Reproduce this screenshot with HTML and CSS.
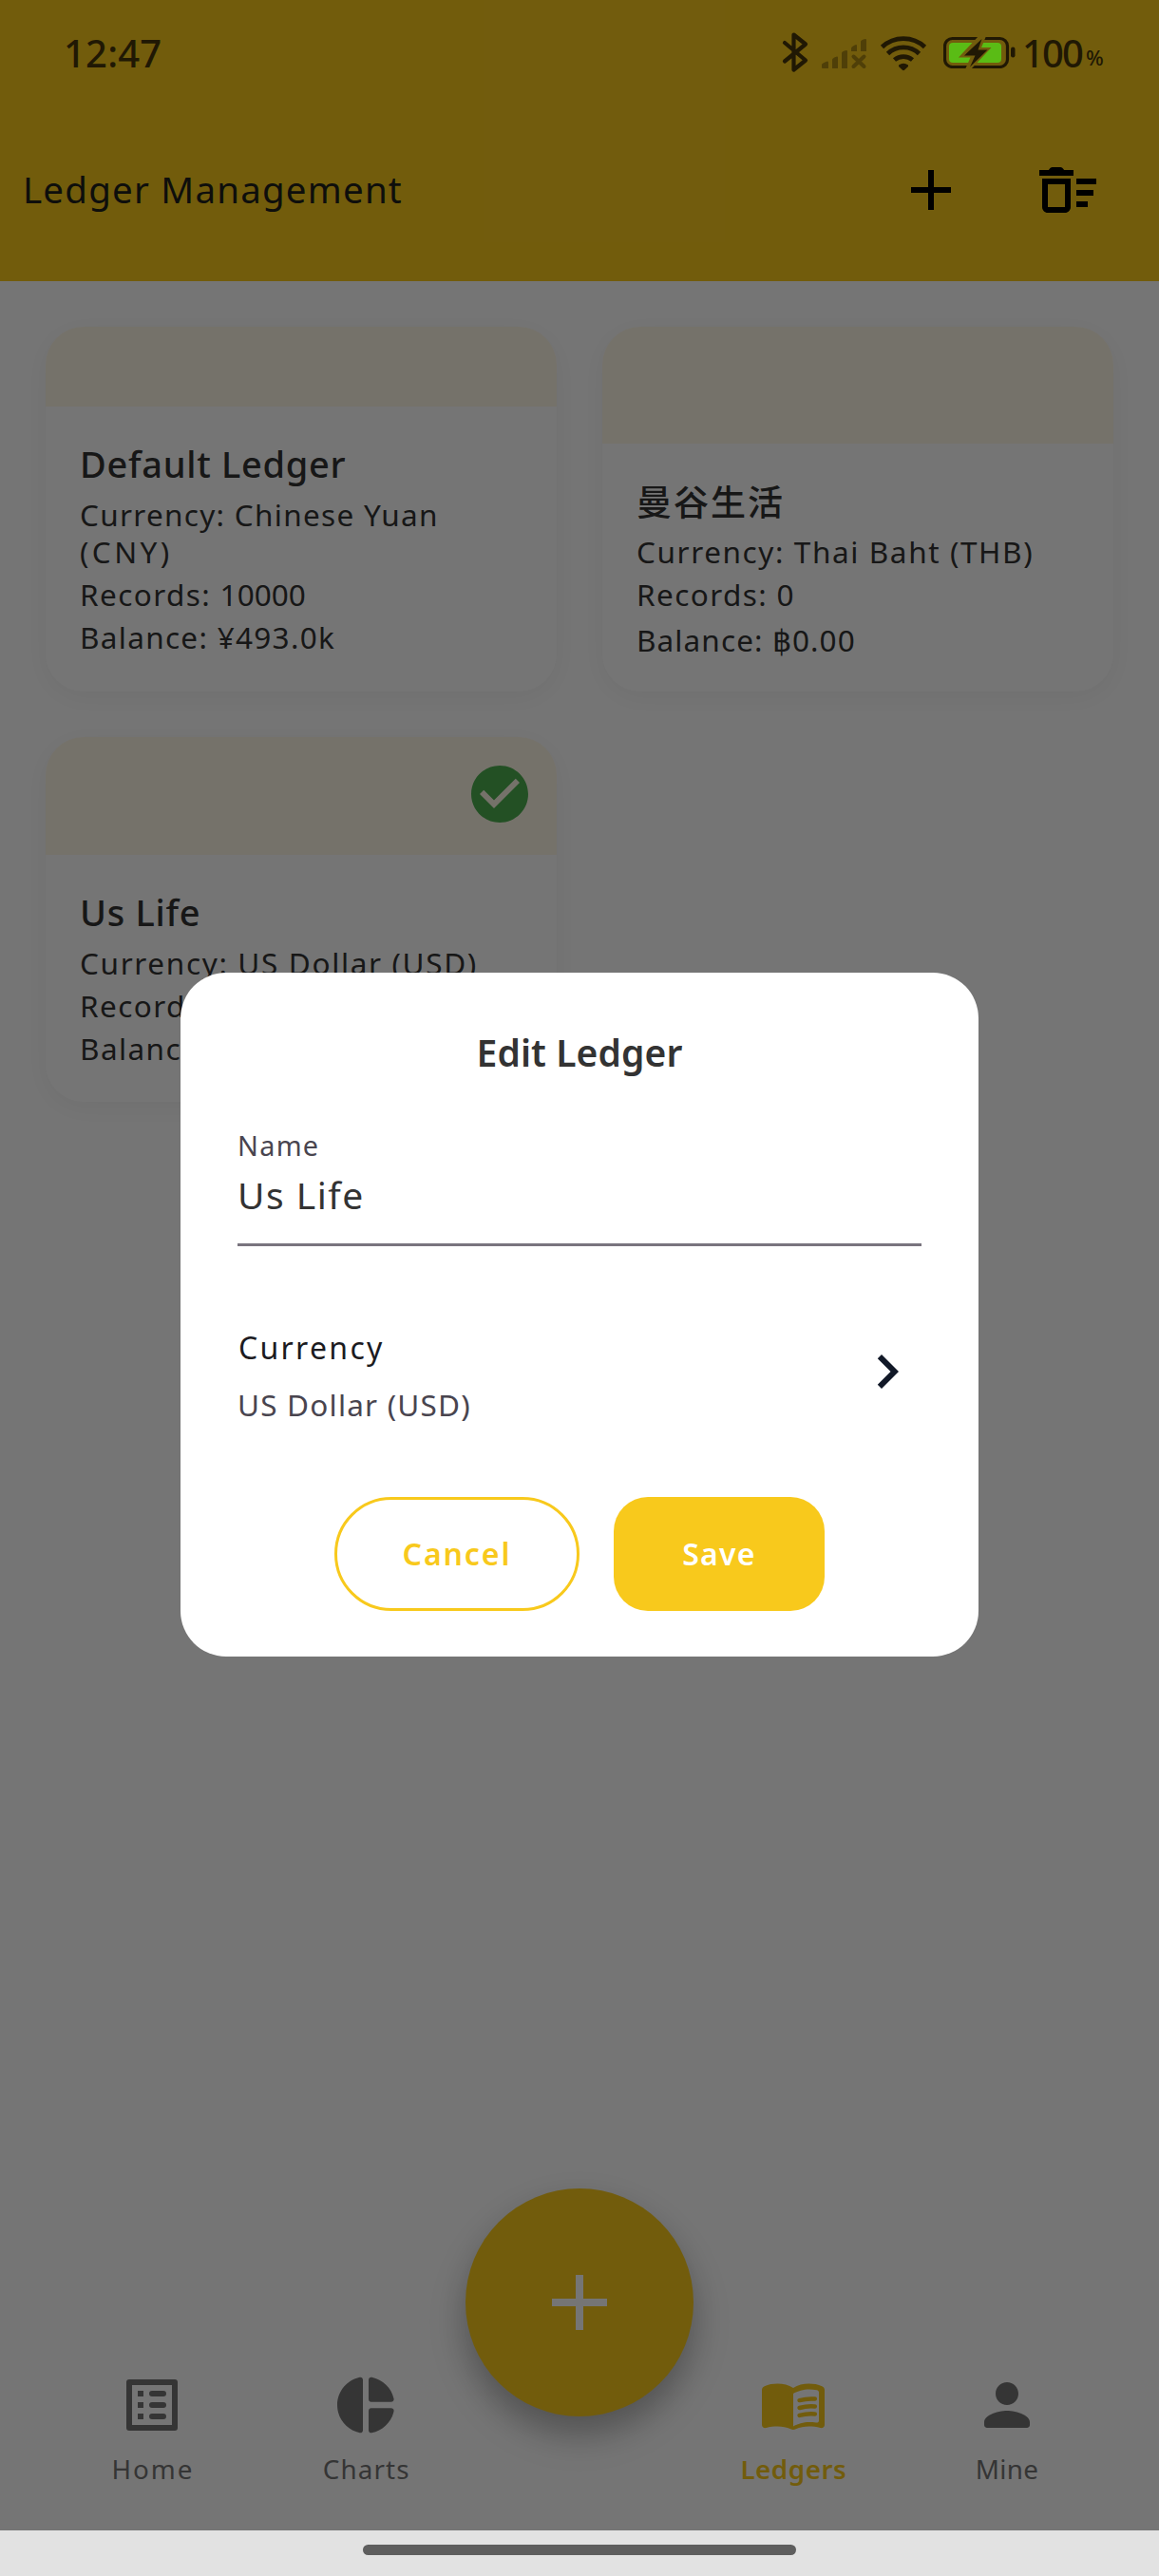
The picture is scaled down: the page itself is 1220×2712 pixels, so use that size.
FILE: index.html
```html
<!DOCTYPE html>
<html lang="en">
<head>
<meta charset="utf-8">
<title>Ledger Management</title>
<link rel="stylesheet" href="styles.css">
</head>
<body>
<div class="screen">
  <div class="app">
    <header class="appbar">
      <h1 class="appbar-title">Ledger Management</h1>
      <div class="appbar-actions">
        <svg class="icon" viewBox="0 0 24 24"><path d="M19 13h-6v6h-2v-6H5v-2h6V5h2v6h6z"/></svg>
        <svg class="icon" viewBox="0 0 24 24"><path d="M15 16h4v2h-4zm0-8h7v2h-7zm0 4h6v2h-6zM3 18c0 1.1.9 2 2 2h6c1.1 0 2-.9 2-2V8H3v10zm2-8h6v8H5v-8zm5.700-5C10.300 4.300 9.900 4 9.400 4H6.600c-.5 0-.9.3-1.300 1H2v2h12V5z"/></svg>
      </div>
    </header>

    <main class="ledgers">
      <article class="card">
        <div class="card-band card-band-short"></div>
        <div class="card-body">
          <h2 class="card-title">Default Ledger</h2>
          <p class="card-line line-cny">Currency: Chinese Yuan<br><span class="code">(CNY)</span></p>
          <p class="card-line">Records: <span class="count">10000</span></p>
          <p class="card-line line-cny">Balance: ¥493.0k</p>
        </div>
      </article>
      <article class="card">
        <div class="card-band"></div>
        <div class="card-body">
          <h2 class="card-title card-title-cjk">曼谷生活</h2>
          <p class="card-line line-thb">Currency: Thai Baht (THB)</p>
          <p class="card-line">Records: 0</p>
          <p class="card-line line-baht">Balance: ฿0.00</p>
        </div>
      </article>
      <article class="card">
        <div class="card-band card-band-tall">
          <svg class="icon check" viewBox="0 0 24 24"><path d="M12 2C6.480 2 2 6.480 2 12s4.480 10 10 10 10-4.480 10-10S17.520 2 12 2zm-2 15l-5-5 1.410-1.410L10 14.170l7.590-7.590L19 8l-9 9z"/></svg>
        </div>
        <div class="card-body">
          <h2 class="card-title">Us Life</h2>
          <p class="card-line line-usd">Currency: US Dollar (USD)</p>
          <p class="card-line">Records:</p>
          <p class="card-line">Balance:</p>
        </div>
      </article>
    </main>

    <nav class="tabs">
      <div class="tab">
        <svg class="icon" viewBox="0 0 24 24"><path fill-rule="evenodd" d="M4 3h16a1 1 0 0 1 1 1v16a1 1 0 0 1-1 1H4a1 1 0 0 1-1-1V4a1 1 0 0 1 1-1zm1 2v14h14V5zm2 2h2v2H7zm0 4h2v2H7zm0 4h2v2H7zM12 7h4a1 1 0 0 1 0 2h-4a1 1 0 0 1 0-2zm0 4h4a1 1 0 0 1 0 2h-4a1 1 0 0 1 0-2zm0 4h4a1 1 0 0 1 0 2h-4a1 1 0 0 1 0-2z"/></svg>
        <span class="tab-label label-home">Home</span>
      </div>
      <div class="tab">
        <svg class="icon" viewBox="0 0 24 24"><path d="M11 3.200v17.600c0 .65-.5 1.100-1.100.95C5.400 20.800 2 16.800 2 12s3.400-8.800 7.900-9.750c.6-.15 1.100.3 1.100.95zM13 3.200V10c0 .5.4.9.9.9h7c.6 0 1.100-.5.95-1.100-.8-3.800-3.900-6.800-7.750-7.550-.6-.15-1.100.3-1.100.95zM13 14v6.800c0 .65.5 1.100 1.100.95 3.850-.75 6.950-3.750 7.750-7.550.15-.6-.35-1.100-.95-1.100h-7c-.5 0-.9.4-.9.9z"/></svg>
        <span class="tab-label label-charts">Charts</span>
      </div>
      <div class="tab"></div>
      <div class="tab tab-active">
        <svg class="icon" viewBox="0 0 24 24"><path fill-rule="evenodd" d="M12 6C10.400 4.900 8.500 4.500 6.500 4.500c-1.600 0-3.200.25-4.600.9C1.300 5.700 1 6.100 1 6.700v12.200c0 .8.7 1.300 1.500 1.100 1.300-.4 2.700-.5 4-.5 1.600 0 3.200.3 4.600.95.6.3 1.200.3 1.800 0 1.400-.65 3-.95 4.600-.95 1.300 0 2.700.1 4 .5.8.2 1.500-.3 1.500-1.100V6.700c0-.6-.3-1-.9-1.300-1.400-.65-3-.9-4.600-.9-2 0-3.900.4-5.500 1.500zM21 17.400c0 .6-.4.85-1 .75-.8-.15-1.650-.15-2.500-.15-1.700 0-4.150.65-5.500 1.500V8c1.350-.85 3.800-1.500 5.500-1.500.95 0 1.850.05 2.750.25.45.1.75.4.75.85z"/><path class="book-lines" d="M14.200 10.350c1.800-.5 3.600-.65 5.400-.5M14.200 13c1.800-.5 3.600-.65 5.400-.5M14.200 15.650c1.800-.5 3.600-.65 5.400-.5"/></svg>
        <span class="tab-label">Ledgers</span>
      </div>
      <div class="tab">
        <svg class="icon" viewBox="0 0 24 24"><path d="M12 12c2.210 0 4-1.790 4-4s-1.790-4-4-4-4 1.790-4 4 1.790 4 4 4zm0 2c-2.670 0-8 1.340-8 4v1c0 .55.45 1 1 1h14c.55 0 1-.45 1-1v-1c0-2.660-5.330-4-8-4z"/></svg>
        <span class="tab-label label-mine">Mine</span>
      </div>
      <button class="fab" aria-label="Add">
        <svg viewBox="0 0 58 58"><path d="M25 0h8v25h25v8H33v25h-8V33H0v-8h25z"/></svg>
      </button>
    </nav>
  </div>

  <div class="scrim">
    <section class="dialog">
      <h2 class="dialog-title">Edit Ledger</h2>
      <div class="field">
        <label class="field-label">Name</label>
        <div class="field-value">Us Life</div>
      </div>
      <div class="option">
        <div>
          <div class="option-title">Currency</div>
          <div class="option-sub">US Dollar (USD)</div>
        </div>
        <svg class="icon chevron" viewBox="0 0 24 24"><path d="M10 6L8.590 7.410 13.170 12l-4.580 4.590L10 18l6-6z"/></svg>
      </div>
      <div class="dialog-actions">
        <button class="btn btn-cancel">Cancel</button>
        <button class="btn btn-save">Save</button>
      </div>
    </section>
  </div>

  <div class="statusbar">
    <span class="clock">12:47</span>
    <div class="status-icons">
      <svg class="bluetooth" viewBox="0 0 28 44"><path d="M3 12l22 18.500-12.500 10V3.500L25 13.500 3 31.500"/></svg>
      <svg class="signal" viewBox="0 0 50 32"><path d="M1 27q0-1.500 6-3.500 1 0 1 1.500v6H2q-1 0-1-1zM12 22q0-2 5-3.500 1 0 1 1v11.500h-6zM22 15q0-2 5-3 1 0 1 1v18h-6zM32 10q0-2 5-4 1 0 1 1v6h-6zM42 3q0-2 5-3 1 0 1 1v12h-6z"/><path class="signal-x" d="M34.500 18.500l11 10.500m0-10.500l-11 10.500"/></svg>
      <svg class="wifi" viewBox="0 0 50 38"><path class="arc" d="M2.500 12.500a33 33 0 0 1 45 0M8.500 19.500a24 24 0 0 1 33 0M15.500 26a15 15 0 0 1 19 0"/><path d="M20 31.500q5-3.500 10 0v1.500L26 36.800q-1 .9-2 0L20 33z"/></svg>
      <svg class="battery" viewBox="0 0 76 34"><rect class="shell" x="1.500" y="2.500" width="66" height="30" rx="8"/><rect class="charge" x="6" y="7" width="55" height="21" rx="4"/><rect x="71" y="11.500" width="4.500" height="11" rx="2.200"/><path class="bolt-gap" d="M37 0L16 22.500h12.500L23 35h6L50.500 12H40l5-12z"/><path d="M40.500 3L22 20.500h11.500L28 32.500 46.500 14.500H36.500z"/></svg>
      <span class="level">100</span><span class="percent">%</span>
    </div>
  </div>
  <div class="homebar"><div class="homebar-pill"></div></div>
</div>
</body>
</html>
```
FILE: styles.css
```css
* { box-sizing: border-box; margin: 0; padding: 0; }

body {
  width: 1220px;
  background: #fff;
  font-family: "Noto Sans", "Noto Sans CJK SC", sans-serif;
  color: #333;
}

.screen { position: relative; width: 1220px; height: 2712px; overflow: hidden; }

.icon { display: block; width: 72px; height: 72px; flex: none; fill: currentColor; }

/* App shell */
.app { display: flex; flex-direction: column; height: 2664px; background: #fff; }

.appbar {
  display: flex;
  justify-content: space-between;
  height: 296px;
  padding: 164px 60px 0 24px;
  background: #f8c91c;
  color: #000;
}
.appbar-title { font-size: 38.5px; font-weight: 400; line-height: 70px; letter-spacing: 1.2px; color: #201f1c; }
.appbar-actions { display: flex; gap: 72px; }

/* Ledger cards */
.ledgers {
  flex: 1;
  display: grid;
  grid-template-columns: 538px 538px;
  grid-auto-rows: 384px;
  gap: 48px;
  padding: 48px;
}
.card {
  border-radius: 40px;
  overflow: hidden;
  background: #fff;
  box-shadow: 0 6px 30px rgba(0, 0, 0, .05);
}
.card-band {
  display: flex;
  justify-content: flex-end;
  height: 123px;
  padding: 24px 24px 0 0;
  background: #fff8e8;
}
.card-band-short { height: 84px; }
.card-band-tall { height: 124px; }
.check { color: #4caf50; }

.card-body { padding: 36px 36px 0; white-space: nowrap; }
.card-title { margin-bottom: 10px; font-size: 38px; font-weight: 500; line-height: 48px; letter-spacing: .7px; }
.card-title-cjk { margin-bottom: 7px; font-size: 37px; line-height: 51px; letter-spacing: 2px; }
.card-line { margin-bottom: 6px; font-size: 31.5px; line-height: 39px; letter-spacing: 1.4px; }
.card-line.line-cny { letter-spacing: 1.3px; }
.card-line .code { letter-spacing: 3.4px; }
.card-line .count { letter-spacing: 0; }
.card-line.line-thb { letter-spacing: 1.6px; }
.card-line.line-usd { letter-spacing: 1.65px; }
.card-line.line-baht { line-height: 46px; letter-spacing: 1.1px; }

/* Bottom navigation */
.tabs {
  position: relative;
  display: flex;
  height: 192px;
  padding: 24px 48px 0;
}
.tab { flex: 1; display: flex; flex-direction: column; align-items: center; color: #757575; }
.tab-label { margin-top: 13px; font-size: 27.8px; line-height: 36px; padding-left: 1px; }
.label-home { letter-spacing: 1.9px; }
.label-charts { letter-spacing: 1.1px; }
.label-mine { letter-spacing: .3px; }
.tab-active { color: #f8c91c; }
.tab-active .tab-label { font-weight: 600; letter-spacing: .5px; }
.book-lines { fill: none; stroke: currentColor; stroke-width: 1.5; stroke-linecap: round; }

.fab {
  position: absolute;
  left: 490px;
  top: -168px;
  width: 240px;
  height: 240px;
  display: flex;
  align-items: center;
  justify-content: center;
  border: 0;
  border-radius: 50%;
  background: #f8c91c;
  box-shadow: 0 18px 30px rgba(0, 0, 0, .2), 0 20px 54px rgba(0, 0, 0, .12);
}
.fab svg { width: 58px; height: 58px; fill: #fff; }

/* Dialog */
.scrim {
  position: absolute;
  inset: 0 0 48px;
  display: flex;
  justify-content: center;
  align-items: flex-start;
  padding-top: 1024px;
  background: rgba(0, 0, 0, .54);
}
.dialog {
  width: 840px;
  height: 720px;
  padding: 60px 60px 48px;
  border-radius: 48px;
  background: #fff;
}
.dialog-title { font-size: 39px; font-weight: 600; line-height: 48px; letter-spacing: .1px; text-align: center; }
.field { margin-top: 54px; border-bottom: 3px solid #79747e; height: 126px; }
.field-label { display: block; font-size: 28.8px; line-height: 39px; letter-spacing: 1.3px; color: #49454f; }
.field-value { margin-top: 4px; font-size: 39px; line-height: 57px; letter-spacing: 1.5px; }
.option { display: flex; justify-content: space-between; height: 132px; margin-top: 66px; }
.option-title { padding-left: 1px; margin-top: 19px; font-size: 32px; line-height: 44px; letter-spacing: 2.3px; color: #1c1b1f; }
.option-sub { margin-top: 16px; font-size: 31.5px; line-height: 44px; letter-spacing: 1.2px; color: #49454f; }
.chevron { margin-top: 30px; color: #111827; }
.dialog-actions { display: flex; justify-content: center; gap: 36px; margin-top: 66px; }
.btn { height: 120px; padding-bottom: 2px; border: 0; font: 600 32px "Noto Sans", sans-serif; letter-spacing: 1.3px; }
.btn-cancel {
  width: 258px;
  border: 3px solid #f8c91c;
  border-radius: 60px;
  background: #fff;
  color: #f8c91c;
  letter-spacing: 1.9px;
}
.btn-save { width: 222px; border-radius: 36px; background: #f8c91c; color: #fff; }

/* System bars */
.statusbar {
  position: absolute;
  inset: 0 0 auto;
  display: flex;
  justify-content: space-between;
  padding: 33px 58px 0 67px;
  color: #201804;
  line-height: 46px;
}
.clock { font-size: 40px; font-weight: 500; letter-spacing: .2px; }
.status-icons { display: flex; }
.status-icons svg { flex: none; fill: currentColor; }
.bluetooth { width: 28px; height: 44px; margin: 0 13px 0 0; }
.bluetooth path { fill: none; stroke: currentColor; stroke-width: 4.2; stroke-linejoin: round; stroke-linecap: round; }
.signal { width: 50px; height: 32px; margin: 8px 12px 0 0; opacity: .42; }
.signal-x { stroke: currentColor; stroke-width: 4; stroke-linecap: round; }
.wifi { width: 50px; height: 38px; margin: 4px 17px 0 0; }
.wifi .arc { fill: none; stroke: currentColor; stroke-width: 4.8; }
.battery { width: 76px; height: 34px; margin: 5px 7px 0 0; }
.battery .shell { fill: none; stroke: currentColor; stroke-width: 3.2; }
.battery .charge { fill: #5abc15; }
.battery .bolt-gap { fill: #725c0d; }
.level { width: 67px; font-size: 40px; font-weight: 500; letter-spacing: -1.9px; }
.percent { width: 19px; margin-top: 4px; font-size: 22px; font-weight: 500; }

.homebar {
  position: absolute;
  inset: auto 0 0;
  display: flex;
  justify-content: center;
  height: 48px;
  padding-top: 15px;
  background: #e2e2e2;
}
.homebar-pill { width: 456px; height: 11px; border-radius: 5.5px; background: #5e5e5e; }
```
